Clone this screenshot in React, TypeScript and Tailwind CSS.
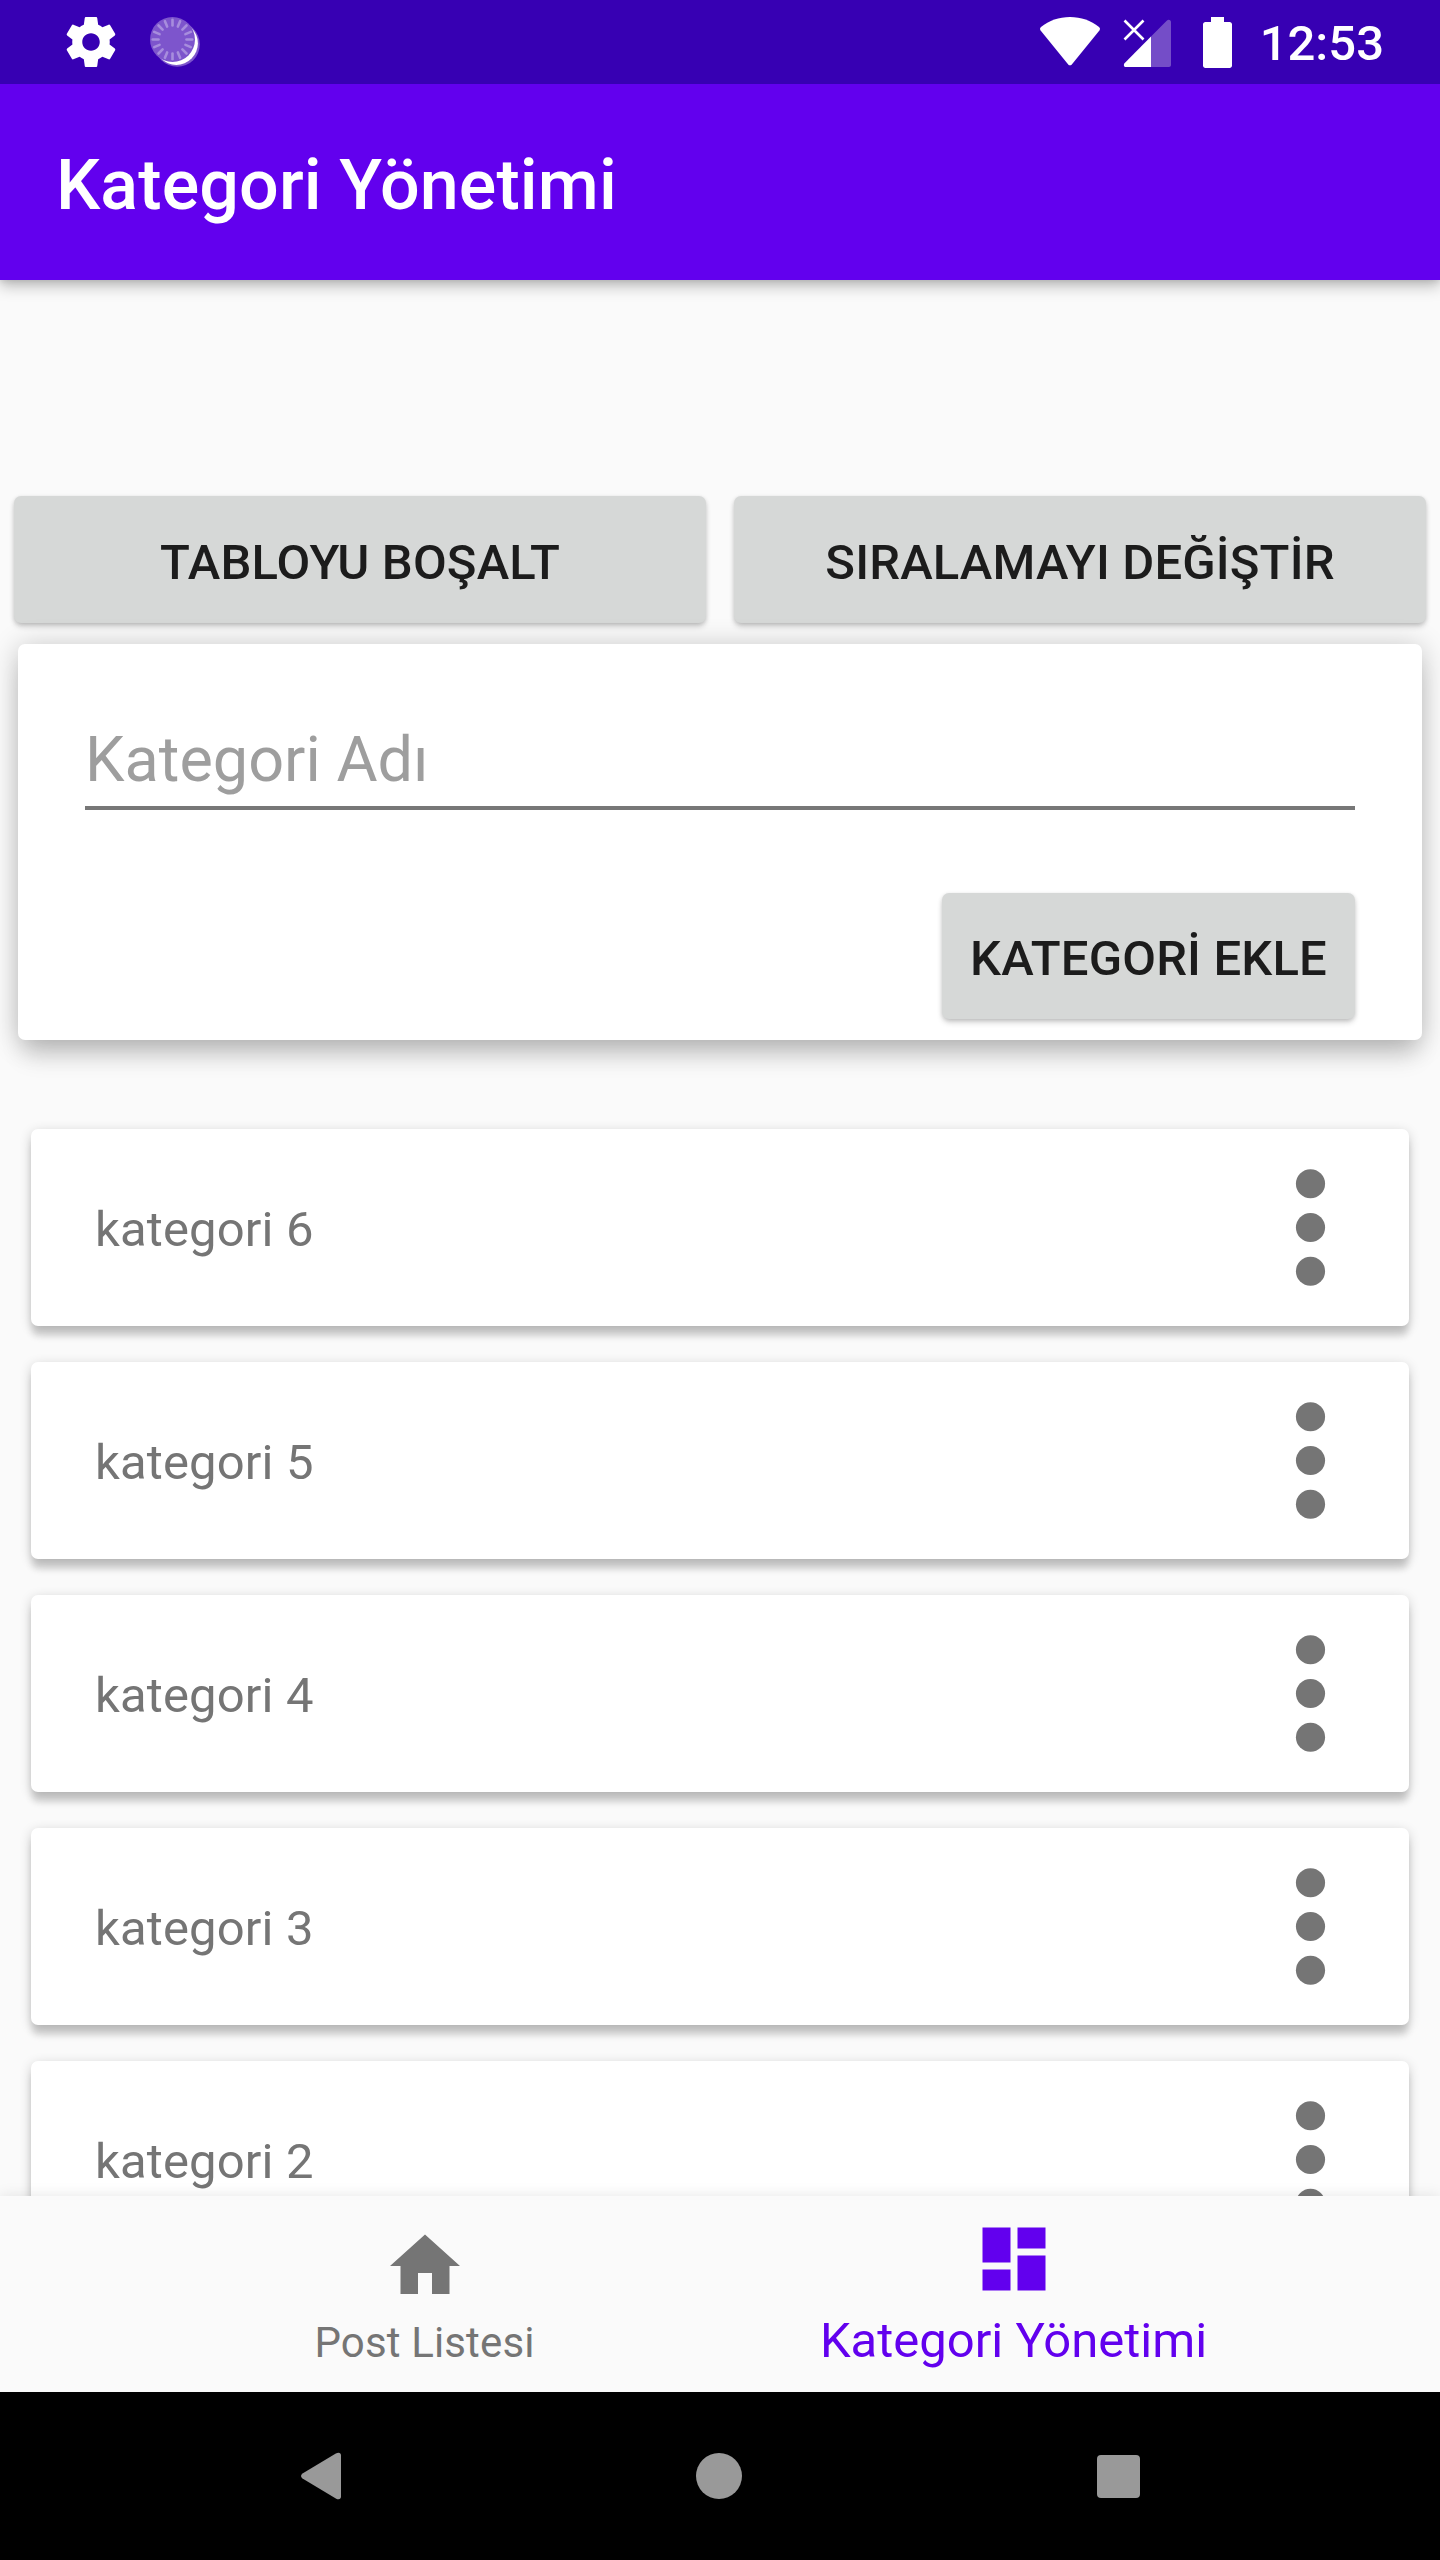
const categories = ['kategori 6', 'kategori 5', 'kategori 4', 'kategori 3', 'kategori 2'];

const spokes = Array.from({ length: 16 }, (_, i) => i * 22.5);

function GearIcon() {
  return (
    <svg viewBox="0 0 24 24" className="size-[60px] fill-white">
      <path d="M19.43 12.98c.04-.32.07-.64.07-.98s-.03-.66-.07-.98l2.11-1.65c.19-.15.24-.42.12-.64l-2-3.46c-.12-.22-.39-.3-.61-.22l-2.49 1c-.52-.4-1.08-.73-1.69-.98l-.38-2.65C14.46 2.18 14.25 2 14 2h-4c-.25 0-.46.18-.49.42l-.38 2.65c-.61.25-1.17.59-1.69.98l-2.49-1c-.23-.09-.49 0-.61.22l-2 3.46c-.13.22-.07.49.12.64l2.11 1.65c-.04.32-.07.65-.07.98s.03.66.07.98l-2.11 1.65c-.19.15-.24.42-.12.64l2 3.46c.12.22.39.3.61.22l2.49-1c.52.4 1.08.73 1.69.98l.38 2.65c.03.24.24.42.49.42h4c.25 0 .46-.18.49-.42l.38-2.65c.61-.25 1.17-.59 1.69-.98l2.49 1c.23.09.49 0 .61-.22l2-3.46c.12-.22.07-.49-.12-.64l-2.11-1.65zM12 15.5c-1.93 0-3.5-1.57-3.5-3.5s1.57-3.5 3.5-3.5 3.5 1.57 3.5 3.5-1.57 3.5-3.5 3.5z" />
    </svg>
  );
}

function LoadingIcon() {
  return (
    <svg viewBox="0 0 50 50" className="ml-[29px] size-[50px]">
      <circle cx="27.3" cy="27.3" r="22.5" fill="#7d55cc" />
      <circle cx="26.3" cy="26.3" r="21.6" fill="#fff" />
      <circle cx="22.5" cy="22.5" r="22.5" fill="#7d55cc" />
      {spokes.map((angle) => (
        <path
          key={angle}
          d="M36.5 22.5H42.3"
          stroke="#a78ddd"
          strokeWidth="2.6"
          strokeLinecap="round"
          transform={`rotate(${angle} 22.5 22.5)`}
        />
      ))}
    </svg>
  );
}

function WifiIcon() {
  return (
    <svg viewBox="0 0 60 50" className="h-[50px] w-[60px] fill-white">
      <path d="M1 10C9 3.5 19 0 30 0s21 3.5 29 10c1.2 1 1.3 2.2.4 3.4L31.8 47.4c-1 1.2-2.6 1.2-3.6 0L.6 13.4C-.3 12.2-.2 11 1 10z" />
    </svg>
  );
}

function SignalIcon() {
  return (
    <svg viewBox="0 0 50 50" className="ml-[23px] size-[50px]">
      <path d="M28 19.5 43.7 3.8C45.5 2 48 3 48 5.2V48c0 1.2-.8 2-2 2H28z" fill="#744dc8" />
      <path d="M28 19.5V50H2.8C.8 50 .3 47.6 1.5 46.2z" fill="#fff" />
      <path d="M1.5 3.5 20.5 22.5M20.5 3.5 1.5 22.5" stroke="#fff" strokeWidth="2.6" />
    </svg>
  );
}

function BatteryIcon() {
  return (
    <svg viewBox="0 0 29 51" className="ml-[30px] h-[51px] w-[29px] fill-white">
      <path d="M8 0h13v5h5.5C28 5 29 6 29 7.5v41c0 1.5-1 2.5-2.5 2.5h-24C1 51 0 50 0 48.5v-41C0 6 1 5 2.5 5H8z" />
    </svg>
  );
}

const raised = 'shadow-[0_4px_6px_-1px_rgba(0,0,0,0.2),0_1px_4px_rgba(0,0,0,0.12)]';

function GreyButton({ label, className }: { label: string; className: string }) {
  return (
    <button
      className={`flex items-center justify-center rounded-[7px] bg-[#d6d8d7] pt-[6px] text-[49px] leading-[58px] font-medium tracking-[0.15px] text-[#1c1c1c] ${raised} ${className}`}
    >
      {label}
    </button>
  );
}

function CategoryCard({ name }: { name: string }) {
  return (
    <li className="flex h-[197px] shrink-0 items-center justify-between rounded-[7px] bg-white pr-[11px] pl-16 shadow-[0_11px_7px_-1px_rgba(0,0,0,0.15),0_3px_12px_rgba(0,0,0,0.19)]">
      <span className="pt-[5px] text-[49px] leading-[58px] tracking-[0.14px] text-[#757575]">{name}</span>
      <svg viewBox="0 0 24 24" className="size-[175px] fill-[#757575]">
        <circle cx="12" cy="6" r="2" />
        <circle cx="12" cy="12" r="2" />
        <circle cx="12" cy="18" r="2" />
      </svg>
    </li>
  );
}

export default function App() {
  return (
    <div className="flex h-[2560px] w-[1440px] flex-col overflow-hidden bg-[#fafafa] font-['Roboto',sans-serif]">
      <header className="relative z-10 shrink-0 bg-[#6200ee] shadow-[0_6px_14px_rgba(0,0,0,0.25),0_1px_7px_rgba(0,0,0,0.12)]">
        <div className="flex h-[84px] items-center justify-between bg-[#3700b3] pr-[56px] pl-[61px]">
          <div className="flex items-center">
            <GearIcon />
            <LoadingIcon />
          </div>
          <div className="flex items-center">
            <WifiIcon />
            <SignalIcon />
            <BatteryIcon />
            <span className="ml-[28px] pt-[4px] text-[49px] leading-[58px] font-medium text-white">12:53</span>
          </div>
        </div>
        <div className="flex h-[196px] items-center pt-[6px] pl-14">
          <h1 className="text-[70px] leading-[82px] font-medium tracking-[0.12px] text-white">Kategori Yönetimi</h1>
        </div>
      </header>

      <main className="flex min-h-0 flex-1 flex-col overflow-hidden">
        <div className="mt-[216px] flex shrink-0 gap-7 px-[14px]">
          <GreyButton label="TABLOYU BOŞALT" className="h-[127px] flex-1" />
          <GreyButton label="SIRALAMAYI DEĞİŞTİR" className="h-[127px] flex-1" />
        </div>

        <section className="mx-[18px] mt-[21px] flex h-[396px] shrink-0 flex-col rounded-[7px] bg-white px-[67px] shadow-[0_22px_24px_-6px_rgba(0,0,0,0.14),0_3px_28px_rgba(0,0,0,0.23)]">
          <input
            placeholder="Kategori Adı"
            className="mt-[78px] h-[88px] w-full border-b-4 border-[#777] bg-transparent pb-[9px] text-[63px] leading-[74px] outline-none placeholder:text-[#9e9e9e]"
          />
          <div className="mt-[83px] flex justify-end">
            <GreyButton label="KATEGORİ EKLE" className="h-[126px] w-[413px]" />
          </div>
        </section>

        <ul className="mt-[89px] flex flex-col gap-9 px-[31px]">
          {categories.map((name) => (
            <CategoryCard key={name} name={name} />
          ))}
        </ul>
      </main>

      <nav className="relative z-10 flex h-[196px] shrink-0 justify-center bg-[#fafafa] pr-[2px] shadow-[0_0_14px_rgba(0,0,0,0.1)]">
        <a className="flex w-[589px] flex-col items-center pt-[28px] text-[#757575]">
          <svg viewBox="0 0 24 24" className="size-[84px] fill-current">
            <path d="M10 20v-6h4v6h5v-8h3L12 3 2 12h3v8z" />
          </svg>
          <span className="mt-[10px] text-[42px] leading-[50px] tracking-[0.14px]">Post Listesi</span>
        </a>
        <a className="flex w-[589px] flex-col items-center pt-[21px] text-[#6200ee]">
          <svg viewBox="0 0 24 24" className="size-[84px] fill-current">
            <path d="M3 13h8V3H3v10zm0 8h8v-6H3v6zm10 0h8V11h-8v10zm0-18v6h8V3h-8z" />
          </svg>
          <span className="mt-[11px] text-[49px] leading-[58px]">Kategori Yönetimi</span>
        </a>
      </nav>

      <footer className="flex h-[168px] shrink-0 items-center justify-between bg-black px-[300px]">
        <svg viewBox="0 0 42 48" className="h-12 w-[42px] fill-[#999]">
          <path d="M35.8 1.6C38.5 0 41 .5 41 3.5v41c0 3-2.5 3.500-5.200 1.900L2.500 26.500C.5 25.200.5 22.800 2.500 21.500z" />
        </svg>
        <div className="mr-px size-[46px] rounded-full bg-[#999]" />
        <div className="size-[43px] rounded-[4px] bg-[#999]" />
      </footer>
    </div>
  );
}
